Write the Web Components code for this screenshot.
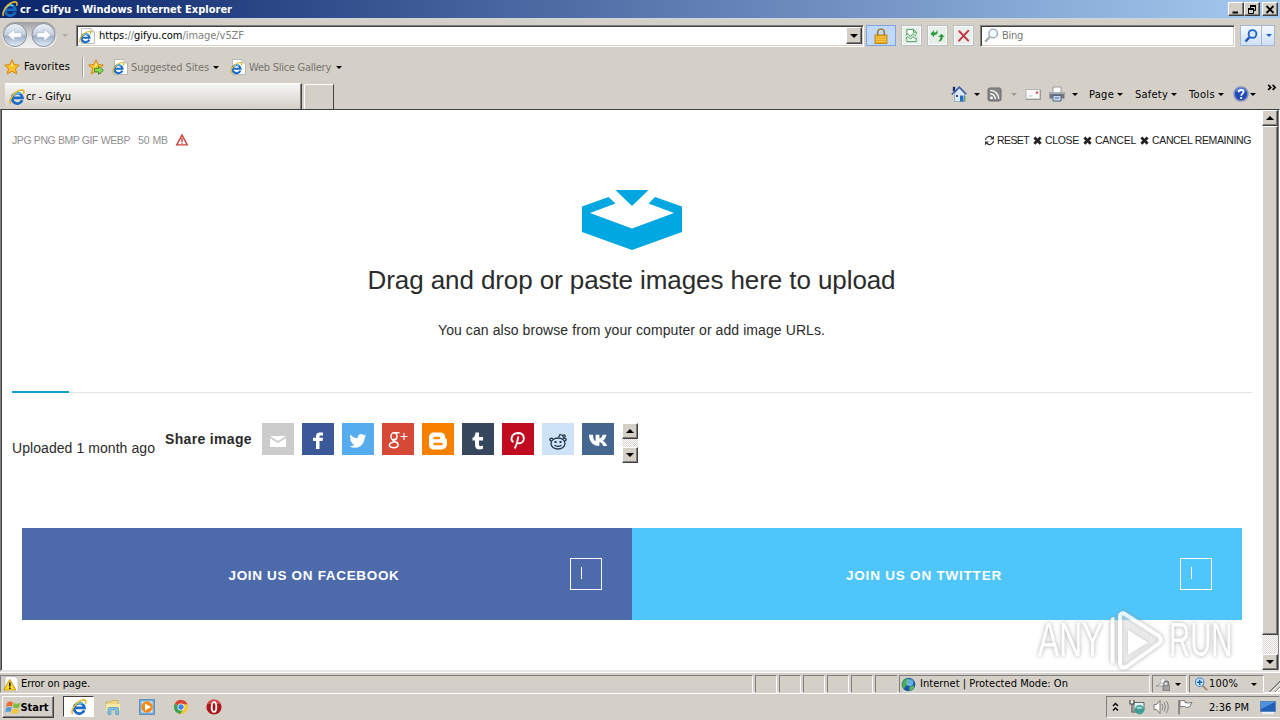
<!DOCTYPE html>
<html lang="en">
<head>
<meta charset="utf-8">
<title>cr - Gifyu</title>
<style>
    body {
        margin: 0;
        width: 1280px;
        height: 720px;
        overflow: hidden;
        background: #d4d0c8;
    }
</style>
</head>
<body>
<desktop-screen></desktop-screen>

<script>
// shared drawings, 16x16 unless a viewBox is given
const IE = `<path d="M13.200 11.200A5.200 5.200 0 1 1 13.500 8.900H4.500" fill="none" stroke="#1b6ac4" stroke-width="2.700"/>
    <path d="M4.300 6.300Q7.500 2.500 11.300 4.900" stroke="#56c5f5" stroke-width="1.500" fill="none"/>
    <path d="M1.600 15C-.8 11.500 5.500 1.700 12.600.9c2.600-.2 2.800 1.800 1.900 4" fill="none" stroke="#e2b82e" stroke-width="1.600"/>`;
const CROSS = '<path d="M2.600.6 5 3 7.400.6l2.200 2.200L7.200 5l2.400 2.400-2.200 2.200L5 7.200 2.600 9.600.4 7.400 2.800 5 .4 2.800z" fill="#222"/>';
const STAR = '<path d="M8 .8 10.200 5.600l5.200.5-3.900 3.600 1.200 5.200L8 12.300l-4.700 2.600 1.200-5.200L.6 6.100l5.200-.5z" fill="#fbc02a" stroke="#cf7e12" stroke-width=".9"/><path d="M8 3 9.300 6.600 6.500 8z" fill="#fff19a"/>';
const ICONS = {
    ie: IE,
    iepage: `<path d="M2.500.5H12L15.500 4v11.500h-13z" fill="#fff" stroke="#aaa" stroke-width=".8"/><path d="M12 .5V4h3.500" fill="#ddd" stroke="#aaa" stroke-width=".6"/><g transform="translate(0 2.800) scale(.78)">${IE}</g>`,
    star: STAR,
    staradd: `${STAR}<path d="M6.500 9.500h4V7.300l5 4-5 4v-2.500h-4z" fill="#8fdc5b" stroke="#288522" stroke-width=".8"/>`,
    lock: '<path d="M4.700 8V4.300a3.300 3.300 0 0 1 6.600 0V8" fill="none" stroke="#a28035" stroke-width="1.700"/><rect x="2" y="7" width="12" height="8.500" fill="#e8a818" stroke="#b57b0b" stroke-width=".8"/><path d="M2.500 9h11M2.500 11.200h11M2.500 13.400h11" stroke="#f7d05c" stroke-width=".9"/>',
    compat: '<path d="M3 7V1.500h7L13 4.500V7M3 10.500v4h10v-4" fill="#fff" stroke="#3d9c4f"/><path d="M10 1.500v3h3M2 8l2-2 3 3 2.500-3 3.500 3M2 11l2-2 3 3 2.500-3 3.500 3" fill="none" stroke="#3d9c4f"/>',
    refresh: '<path d="M.5 6 4.300 2.300v2.500C6.500 4.800 7.300 4 7.600 1.500 9 5.500 7.500 7.300 4.300 7.400v2.500z" fill="#2c9c3c"/><path d="M15.700 9.700 12.300 6.200 8.700 9.700h2.300c0 2.200-.5 3.500-2.500 4.800 3.500 0 5-1.500 5-4.800z" fill="#2c9c3c"/>',
    stop: '<path d="M3.500 3.500 13 13.500M13 3 3.300 13.500" stroke="#c93547" stroke-width="2.100" stroke-linecap="round"/>',
    lens: '<circle cx="9.800" cy="5.800" r="4.600" fill="#f4faff" stroke="#9ea9b6" stroke-width="1.500"/><path d="M6.200 9.400 1.300 14.600" stroke="#a5a5a5" stroke-width="2.200"/>',
    lensblue: '<circle cx="9.500" cy="6" r="3.900" fill="#d5ecff" stroke="#1d62cb" stroke-width="1.800"/><path d="M6.300 9.400 2.500 13.500" stroke="#1d55b8" stroke-width="2.400"/>',
    home: '<path d="M3.500 8v7.500h10V7.500L8.500 2z" fill="#dcebfb" stroke="#8299bd" stroke-width=".7"/><path d="M.8 8.500 8.300 1.200l7 7" fill="none" stroke="#3e5fa8" stroke-width="1.600"/><path d="M3 .8v4.500" stroke="#203077" stroke-width="2.400"/><path d="M9 9.500h3.500v6H9z" fill="#286cc2"/><path d="M5 9h2v2H5z" fill="#3b4c70"/><path d="M13.800 10v5.500" stroke="#62a957" stroke-width="1.400"/>',
    rss: '<rect x="1" y="1" width="14" height="14" rx="2" fill="#858585" stroke="#6f6f6f"/><circle cx="4.800" cy="11.500" r="1.500" fill="#fff"/><path d="M3.500 7.200a5.500 5.500 0 0 1 5.400 5.500M3.500 3.600a9 9 0 0 1 9 9" fill="none" stroke="#fff" stroke-width="1.500"/>',
    mail: '<rect x="1" y="3.500" width="14" height="9.500" fill="#fafafa" stroke="#b6b3b1"/><path d="M1 13.500h14.500V4" fill="none" stroke="#989594"/><path d="M10.800 5.500h2.400v2.200h-2.400z" fill="#d4555c"/><path d="M3.500 10h4" stroke="#bbb"/>',
    printer: '<path d="M4 1h8v6H4z" fill="#fff" stroke="#9a9a9a"/><path d="M.5 6h15v6.500H.5z" fill="#6d7682"/><path d="M.5 6h15v2H.5z" fill="#a5adb7"/><path d="M4 9.500h8v5.500H4z" fill="#c8dbf2" stroke="#536782"/><path d="M6 12h4" stroke="#3f62a0"/>',
    help: '<circle cx="8" cy="8" r="7" fill="#234bb7" stroke="#8292ba" stroke-width="1.500"/><path d="M3 5.500a5.500 5.500 0 0 1 10 0" fill="#6797ed"/><path d="M5.700 6.300C5.700 3 10.600 3.200 10.500 6 10.500 7.500 8.200 7.700 8.200 9.800" stroke="#fff" stroke-width="1.700" fill="none"/><path d="M8.200 11v2" stroke="#fff" stroke-width="1.800"/>',
    warn: '<path d="M2 .5h10l3 3v12H2z" fill="#fff" stroke="#aaa" stroke-width=".6"/><path d="M6.800 3.500.8 14h12z" fill="#ffdf22" stroke="#c89208" stroke-linejoin="round"/><path d="M6.800 6.500v4M6.800 11.600v1.400" stroke="#111" stroke-width="1.600"/>',
    globe: '<circle cx="8" cy="8" r="7.300" fill="#1c57a7"/><path d="M2 4.500C4 1.500 8 1 9 2.500L7 5 8.500 8 5 9.500 3 13C1 11 .5 7 2 4.500z" fill="#48ad55"/><path d="M9 10.500l5-1.500c.5 3-2.500 5.500-5 6z" fill="#57b75a"/><circle cx="9.500" cy="6" r="3.700" fill="#7ccbf4" opacity=".75"/>',
    filter: '<path d="M1 10c2 0 4-2 6-5 3-2 6 1 5 5z" fill="#eee" stroke="#999"/><circle cx="8" cy="5" r="2.500" fill="#fff" stroke="#bbb"/><path d="M9 9V7.500a2.300 2.300 0 0 1 4.600 0V9" fill="none" stroke="#777" stroke-width="1.200"/><path d="M7.500 9h7.500v6H7.500z" fill="#888"/><path d="M9 11h5M9 13h5" stroke="#bbb"/>',
    zoom: '<circle cx="6.500" cy="6" r="4.800" fill="#d6edff" stroke="#3f83d0" stroke-width="1.300"/><path d="M6.500 3v6M3.500 6h6" stroke="#175eb4" stroke-width="1.800"/><path d="m10 10 5 5" stroke="#a78a6c" stroke-width="2.400"/>',
    flag: '<path d="M1 3.200Q4 .5 7.500 2.500L6.300 7.200Q3.500 5.500 0 7.800z" fill="#ec6a2c"/><path d="M8.500 3q3.200 1.800 7 0l-1.300 4.800q-3.500 1.800-7 0z" fill="#7cbc45"/><path d="M0 8.900Q3.300 6.500 6.100 8.300L4.900 13Q2 11.300-1 13.500z" fill="#579bd9"/><path d="M7 9q3.500 1.800 7 0l-1.300 4.700q-3.400 1.800-6.900 0z" fill="#f8c437"/>',
    folder: '<path d="M1 3h5l1-1.500h6V9H1z" fill="#f0d982" stroke="#c2a74f" stroke-width=".7"/><path d="M1 5h14v7H1z" fill="#f7e8a5"/><path d="M3 15.500V9.800Q3 8.500 4.500 8.500h7.500q1.500 0 1.500 1.300v5.700h-2.700V11H5.800v4.500z" fill="#7fc1e6" stroke="#5299c5" stroke-width=".7"/>',
    media: '<rect x=".7" y=".7" width="14.600" height="14.600" fill="#80b7e8" stroke="#4e81b7"/><path d="M2.500 2.500h11v11h-11z" fill="#cfe6fb"/><circle cx="8" cy="8" r="5.800" fill="#f28a19"/><path d="M6 4.500 12 8l-6 3.500z" fill="#fff"/>',
    chrome: '<circle cx="8" cy="8" r="7" fill="#f7c72d"/><path d="M8 8 1.900 4.500A7 7 0 0 1 14.500 5.200H8z" fill="#dc4334"/><path d="M8 8 1.900 4.500A7 7 0 0 0 7.400 15L10.500 9.500z" fill="#3ba05a"/><circle cx="8" cy="8" r="3.500" fill="#fff"/><circle cx="8" cy="8" r="2.700" fill="#4083e0"/>',
    opera: '<circle cx="8" cy="8" r="7.600" fill="#ad171a"/><path d="M1.500 5a7 7 0 0 1 13 0z" fill="#df6260" opacity=".7"/><ellipse cx="8" cy="8" rx="2.300" ry="4.900" fill="#a01518" stroke="#fff" stroke-width="1.800"/>',
    net: '<path d="M5 3.500h10v8H5z" fill="#dff5f7" stroke="#626b6b"/><path d="M1 1v4h4V1M3 5v8h4" fill="none" stroke="#555" stroke-width="1.200"/><path d="M2.200 2h1.600v2H2.200z" fill="#fff"/><circle cx="10.500" cy="10.800" r="4.700" fill="#3f9e95"/><path d="M7 9q3-3 7 0-3 2-7 0" fill="#a0ded0"/>',
    sound: '<path d="M1 5.500h2.500L7 1.500v13l-3.500-4H1z" fill="#fff" stroke="#777"/><path d="M9 5q2 3 0 6M11 3.500q3 4.500 0 9M13.500 2q3.500 6 0 12" fill="none" stroke="#888"/>',
    action: '<path d="M2 1v14.500" stroke="#777" stroke-width="1.500"/><path d="M3 2q3-1 5 0v1.500q3 1 7 0L12.500 8q-3 1-5-.5Q5 7 3 8z" fill="#fff" stroke="#777"/>',
    desk: '<path d="M.5 2.500h15v10H.5z" fill="#2360ba" stroke="#5684b7"/><path d="M1 3h14L1 10z" fill="#4f91df"/><path d="M2 14h12" stroke="#eef" stroke-width="2"/>',
    danger: '<path d="M8 1.500 1 14.500h14z" fill="none" stroke="#cc433c" stroke-width="1.900"/><path d="M8 5.500v5M8 11.500v1.500" stroke="#cc433c" stroke-width="2"/>',
    reload: '<path d="M2 7.500A5.800 5.800 0 0 1 12 4M14 8.500A5.800 5.800 0 0 1 4 12" fill="none" stroke="#333" stroke-width="1.700"/><path d="M14.500 1v5.500H9zM1.500 15V9.500H7z" fill="#333"/>',
    cross: ['0 0 10 10', CROSS],
    chevrons: ['0 0 8 8', '<path d="M1 1.500 3 3.500 1 5.500M4.500 1.500l2 2-2 2" fill="none" stroke="#000" stroke-width="1.300"/>'],
    upchev: ['0 0 7 10', '<path d="M1 4 3.500 1.500 6 4M1 8.500 3.500 6 6 8.500" fill="none" stroke="#000" stroke-width="1.400"/>'],
    min: ['0 0 10 9', '<path d="M1.500 7.500h5.500" stroke="#000" stroke-width="2"/>'],
    restore: ['0 0 10 9', '<path d="M3.500 3V.5h5v5H7" fill="none" stroke="#000"/><path d="M3 1h6M1 4h6" stroke="#000" stroke-width="2"/><path d="M1.500 4v4.500h5V4" fill="none" stroke="#000"/>'],
    close: ['0 0 10 9', '<path d="m1.500 1 7 7M8.500 1l-7 7" stroke="#000" stroke-width="1.800"/>'],
    upload: ['0 0 100 60', '<path d="M33.500 0h33L50 16zM0 16.500 26.500 7 33.500 13.500 8 23 50 38.500 92 23 66.500 13.500 73 7 100 16.500V42L50 60 0 42z" fill="#00a7e1"/>'],
    watermark: ['0 0 56 60', '<path d="M2.500 9q0-3 4-3V52q-4 2-4-2z" fill="#fff"/><path d="M12 48V4.500q1-3 4-2L51 25q4 4 0 7.500L19 55.500q-6 3-7-3z" fill="#fff" fill-opacity=".35" stroke="#fff" stroke-width="4" stroke-linejoin="round"/><path d="M20 19v25l20-12.500z" fill="#fff"/>'],
    // share buttons, 32x32
    email: ['0 0 32 32', '<path d="M8 13h16l-8 5z" fill="#fff"/><path d="M8 15.200 16 20l8-4.800V24H8z" fill="#fff"/>'],
    facebook: ['0 0 32 32', '<path d="M14 26v-8h-3v-3.300h3v-1.500c0-2.700 1.700-3.700 4-3.700h3v3h-2c-1.300 0-1.500.5-1.500 1.400v.8H21l-.5 3.300h-3v8z" fill="#fff"/>'],
    twitter: ['0 0 32 32', '<path transform="translate(7.500 9.500) scale(.7)" d="M23.950 4.570a10 10 0 0 1-2.820.770 4.960 4.960 0 0 0 2.160-2.720 9.900 9.900 0 0 1-3.120 1.190 4.920 4.920 0 0 0-8.380 4.480C7.690 8.090 4.070 6.130 1.640 3.160a4.920 4.920 0 0 0 1.520 6.570 4.900 4.900 0 0 1-2.230-.61v.060a4.920 4.920 0 0 0 3.950 4.830 5 5 0 0 1-2.210.080 4.940 4.940 0 0 0 4.600 3.420A9.870 9.870 0 0 1 0 19.540a14 14 0 0 0 7.550 2.210c9.050 0 14-7.500 14-13.980v-.64a9.900 9.900 0 0 0 2.400-2.560z" fill="#fff"/>'],
    google: ['0 0 32 32', '<g fill="none" stroke="#fff" stroke-width="1.500"><ellipse cx="12" cy="13.500" rx="3" ry="3.700"/><path d="M12 9.700h5.500M14.500 16c-5 0-4 2.300-1.500 2.800 4 .8 4.500 5.900-1 6-6.500 0-6-5.200.5-5.800"/><path d="M18.500 13.500h7M22 10v7" stroke-width="1.200"/></g>'],
    blogger: ['0 0 32 32', '<path d="M12 9.500h6c4 0 5.300 2.500 5.300 5.400 0 1.100 1.700.6 1.700 2v3.600c0 3.800-2.200 6-6 6h-7c-3.500 0-5-2.200-5-5.500v-6c0-3.500 2-5.500 5-5.500z" fill="#fff"/><path d="M12.500 14.900H17M12.500 21h7" stroke="#f80" stroke-width="2.500" stroke-linecap="round"/>'],
    tumblr: ['0 0 32 32', '<path d="M13.500 9.500H17V14h4v3.500h-4v4c0 2 1.500 2 4 1v3.200c-4 1.700-8 .8-8-3.700v-4.500h-2.500v-2.700c2-.6 2.700-2.300 3-5.300z" fill="#fff"/>'],
    pinterest: ['0 0 32 32', '<path d="M11.500 19C8.500 17.800 8.300 10.500 16 10c7.500 0 7.500 9.500 1.500 10.300-1.500.2-2.700-.8-3-1.600M16.300 13.500c-.5 4-1.700 8.500-3.500 12" fill="none" stroke="#fff" stroke-width="1.900"/>'],
    reddit: ['0 0 32 32', '<g fill="none" stroke="#26384c" stroke-width="1.300"><ellipse cx="16" cy="20.500" rx="7" ry="5.500"/><path d="M9.500 18c-3-.5-2-4 1.500-2.300M22.500 18c3-.5 2-4-1.500-2.300M16.500 14.500l1.500-3 3 1M12.500 22.300q3.500 2.200 7 0"/><circle cx="22" cy="13" r="1.200"/></g><path d="M12.500 18h2v2h-2zM17.500 18h2v2h-2z" fill="#26384c"/>'],
    vk: ['0 0 32 32', '<path transform="translate(7.500 8.700) scale(.72)" d="M13.200 19C5 19 .3 13.400.1 5h4.100c.1 6.200 2.800 8.800 5 9.300V5h3.900v5.300c2.300-.2 4.800-2.600 5.700-5.300h3.900a11.500 11.500 0 0 1-5.300 7.500A12 12 0 0 1 23.600 19h-4.200c-.9-2.900-3.200-5.100-6.300-5.400V19z" stroke="#fff" stroke-width="1.400" fill="#fff"/>']
};

// <ui-icon name size [height]>
class UiIcon extends HTMLElement {
    constructor() {
        super();
        this.attachShadow({ mode: 'open' });
    }

    connectedCallback() {
        const icon = ICONS[this.getAttribute('name')];
        const [box, body] = Array.isArray(icon) ? icon : ['0 0 16 16', icon];
        const w = this.getAttribute('size') || 16;
        const h = this.getAttribute('height') || w;
        this.shadowRoot.innerHTML = `
        <style>
            :host { display: block; flex: none; width: ${w}px; height: ${h}px; }
            svg { display: block; overflow: visible; }
        </style>
        <svg width="${w}" height="${h}" viewBox="${box}">${body}</svg>`;
    }
}
customElements.define('ui-icon', UiIcon);

// one line of text, letter-spaced to fill the given width
class FitText extends HTMLElement {
    constructor() {
        super();
        this.attachShadow({ mode: 'open' });
        this.shadowRoot.innerHTML = `
        <style>
            :host { display: block; flex: none; white-space: nowrap; }
            span { display: inline-block; }
        </style>
        <span><slot></slot></span>`;
    }

    connectedCallback() {
        const width = Number(this.getAttribute('width'));
        const span = this.shadowRoot.querySelector('span');
        const natural = span.getBoundingClientRect().width;
        span.style.letterSpacing = (width - natural) / this.textContent.length + 'px';
        this.style.width = width + 'px';
    }
}
customElements.define('fit-text', FitText);

// registers an element that only has static markup
function define(name, css, html) {
    const template = document.createElement('template');
    template.innerHTML = `<style>${css}</style>${html}`;
    customElements.define(name, class extends HTMLElement {
        constructor() {
            super();
            this.attachShadow({ mode: 'open' });
            this.shadowRoot.appendChild(template.content.cloneNode(true));
        }
    });
}

// small black dropdown triangle
define('drop-arrow', `
    :host { display: block; flex: none; width: 0; height: 0; border: 3px solid transparent; border-top-color: var(--arrow, #000); border-bottom: 0; }
    :host([up]) { border: 3px solid transparent; border-bottom-color: #000; border-top: 0; }
    :host([big]) { border-left-width: 4px; border-right-width: 4px; border-top-width: 4px; }
    :host([big][up]) { border-top-width: 0; border-bottom-width: 4px; }
`, '');

// raised classic button
define('raised-button', `
    :host {
        display: flex; flex: none; box-sizing: border-box; align-items: center; justify-content: center;
        width: 16px; height: 16px; background: #d4d0c8;
        border: 1px solid; border-color: #fff #404040 #404040 #fff;
        box-shadow: inset -1px -1px #808080;
    }
`, '<slot></slot>');

define('title-bar', `
    :host { display: flex; flex: none; height: 18px; align-items: center; background: linear-gradient(90deg, #0a246a, #a6caf0); color: #fff; font-weight: bold; }
    fit-text { margin: 2px 0 0 2px; }
    .buttons { display: flex; margin-left: auto; padding-right: 2px; }
    raised-button { width: 16px; height: 14px; }
    .buttons raised-button:last-child { margin-left: 2px; }
`, `
    <ui-icon name="ie" size="16" style="margin-left:2px"></ui-icon>
    <fit-text width="212">cr - Gifyu - Windows Internet Explorer</fit-text>
    <div class="buttons">
        <raised-button><ui-icon name="min" size="10" height="9"></ui-icon></raised-button>
        <raised-button><ui-icon name="restore" size="10" height="9"></ui-icon></raised-button>
        <raised-button><ui-icon name="close" size="10" height="9"></ui-icon></raised-button>
    </div>
`);

define('nav-bar', `
    :host { display: flex; flex: none; height: 36px; align-items: center; box-sizing: border-box; padding-bottom: 2px; border-top: 1px solid #cdd4e2; }
    .travel { width: 61px; margin: -1px 0 0 2px; }
    .field { display: flex; box-sizing: border-box; height: 22px; align-items: center; background: #fff; border: 1px solid; border-color: #808080 #fff #fff #808080; box-shadow: inset 1px 1px #404040, inset -1px -1px #d4d0c8; }
    .address { width: 788px; margin-left: 8px; padding: 0 1px 0 2px; }
    .address fit-text { margin: 1px 0 0 4px; }
    .address raised-button { margin-left: auto; width: 16px; height: 17px; }
    .grey { color: #808080; }
    .tool { display: flex; box-sizing: border-box; width: 21px; height: 21px; margin-left: 5px; align-items: center; justify-content: center; background: #e8eeea; border: 1px solid #b9c1c7; box-shadow: inset 0 0 0 1px #f7faf8; }
    .lock { width: 30px; margin-left: 2px; background: #bfdafd; border-color: #7ca4e4; box-shadow: none; }
    .search { width: 255px; margin-left: 6px; color: #777; padding-left: 3px; }
    .go { display: flex; box-sizing: border-box; height: 21px; width: 35px; margin-left: 5px; border: 1px solid #a5b7d4; background: linear-gradient(#f3f8ff, #cfe0f5); align-items: center; }
    .go ui-icon { margin: 0 2px; }
    .go i { width: 1px; height: 19px; background: #a5b7d4; margin-right: 4px; }
`, `
    <svg class="travel" width="61" height="28" viewBox="0 0 61 28">
        <defs>
            <linearGradient id="g" x2="0" y2="1"><stop stop-color="#edf2f9"/><stop offset=".48" stop-color="#c4d0e0"/><stop offset=".55" stop-color="#9daec6"/><stop offset="1" stop-color="#e4eefb"/></linearGradient>
            <linearGradient id="rim" x2="0" y2="1"><stop stop-color="#9d9da3"/><stop offset=".6" stop-color="#e4e3e3"/><stop offset="1" stop-color="#f3f2f1"/></linearGradient>
        </defs>
        <rect x="0" y="1" width="55" height="26" rx="13" fill="url(#rim)"/>
        <circle cx="13" cy="14" r="11.500" fill="url(#g)" stroke="#8a909a"/><circle cx="41.500" cy="14" r="11.500" fill="url(#g)" stroke="#8a909a"/>
        <path d="M5.500 14l7-6v3.700h7v4.600h-7V20zM49 14l-7-6v3.700h-7v4.600h7V20z" fill="#fff" stroke="#aebbd0" stroke-width=".7"/>
    </svg>
    <drop-arrow style="--arrow:#aaa;margin-left:-1px"></drop-arrow>
    <div class="field address">
        <ui-icon name="iepage"></ui-icon>
        <fit-text width="145">https:<span class="grey">//</span>gifyu.com<span class="grey">/image/v5ZF</span></fit-text>
        <raised-button><drop-arrow big></drop-arrow></raised-button>
    </div>
    <div class="tool lock"><ui-icon name="lock"></ui-icon></div>
    <div class="tool"><ui-icon name="compat" size="15"></ui-icon></div>
    <div class="tool"><ui-icon name="refresh" size="15"></ui-icon></div>
    <div class="tool"><ui-icon name="stop" size="15"></ui-icon></div>
    <div class="field search"><ui-icon name="lens" size="15"></ui-icon><fit-text width="21" style="margin:1px 0 0 3px">Bing</fit-text></div>
    <div class="go"><ui-icon name="lensblue"></ui-icon><i></i><drop-arrow style="--arrow:#1d62cb"></drop-arrow></div>
`);

define('favorites-bar', `
    :host { display: flex; flex: none; height: 26px; align-items: center; padding-left: 4px; }
    .sep { width: 1px; height: 20px; background: #a09c96; box-shadow: 1px 0 #fff; margin: 0 5px 0 12px; }
    .grey { color: #77746f; margin: 1px 0 0 3px; }
`, `
    <ui-icon name="star"></ui-icon>
    <fit-text width="46" style="margin-left:4px">Favorites</fit-text>
    <div class="sep"></div>
    <ui-icon name="staradd"></ui-icon>
    <ui-icon name="iepage" style="margin-left:8px"></ui-icon>
    <fit-text class="grey" width="78">Suggested Sites</fit-text>
    <drop-arrow style="margin-left:4px"></drop-arrow>
    <ui-icon name="iepage" style="margin-left:11px"></ui-icon>
    <fit-text class="grey" width="82">Web Slice Gallery</fit-text>
    <drop-arrow style="margin-left:5px"></drop-arrow>
`);

define('command-bar', `
    :host { display: flex; flex: none; height: 29px; box-sizing: border-box; }
    .tab { display: flex; box-sizing: border-box; width: 297px; height: 26px; margin: 3px 0 0 5px; padding-left: 4px; align-items: center; background: linear-gradient(#f7f6f5, #d4d0c8); border: solid; border-width: 1px 1px 0 0; border-color: #fff #404040; box-shadow: inset -1px 0 #808080; }
    .new { box-sizing: border-box; width: 30px; height: 25px; margin: 4px 0 0 2px; border: solid; border-width: 1px 1px 0 1px; border-color: #fff #404040 #fff #fff; }
    .tools { display: flex; align-items: center; height: 28px; margin-left: auto; padding-right: 3px; }
    .tools > * { margin-left: var(--gap, 0); }
    .tools fit-text { margin-top: 1px; }
`, `
    <div class="tab"><ui-icon name="ie"></ui-icon><fit-text width="45" style="margin-left:1px">cr - Gifyu</fit-text></div>
    <div class="new"></div>
    <div class="tools">
        <ui-icon name="home"></ui-icon>
        <drop-arrow style="--gap:7px"></drop-arrow>
        <ui-icon name="rss" size="15" style="--gap:7px"></ui-icon>
        <drop-arrow style="--gap:9px;--arrow:#999"></drop-arrow>
        <ui-icon name="mail" style="--gap:8px"></ui-icon>
        <ui-icon name="printer" style="--gap:8px"></ui-icon>
        <drop-arrow style="--gap:7px"></drop-arrow>
        <fit-text width="25" style="--gap:11px">Page</fit-text>
        <drop-arrow style="--gap:3px"></drop-arrow>
        <fit-text width="33" style="--gap:12px">Safety</fit-text>
        <drop-arrow style="--gap:3px"></drop-arrow>
        <fit-text width="26" style="--gap:12px">Tools</fit-text>
        <drop-arrow style="--gap:3px"></drop-arrow>
        <ui-icon name="help" style="--gap:9px"></ui-icon>
        <drop-arrow style="--gap:1px"></drop-arrow>
        <ui-icon name="chevrons" size="10" style="--gap:11px;margin-bottom:12px"></ui-icon>
    </div>
`);

define('scroll-bar', `
    :host { display: flex; flex: none; flex-direction: column; width: 16px; background: repeating-conic-gradient(#fff 0 25%, #d9d6d0 0 50%) 0 0 / 2px 2px; justify-content: space-between; }
    ::slotted(raised-button) { flex: 1; height: auto; margin-bottom: 19px; }
`, `
    <raised-button><drop-arrow big up></drop-arrow></raised-button>
    <slot></slot>
    <raised-button><drop-arrow big></drop-arrow></raised-button>
`);

// coloured square, colour comes from --fill
define('share-button', `
    :host { display: block; width: 32px; height: 32px; background: var(--fill); }
`, '<slot></slot>');

define('join-banner', `
    :host { display: flex; box-sizing: border-box; width: 610px; height: 92px; align-items: center; padding: 2px 30px 0 0; background: var(--fill); color: #fff; font: bold 13.5px/16px "Liberation Sans", sans-serif; }
    .label { flex: 1; display: flex; justify-content: center; padding: 1px 0 0 36px; }
    .box { display: flex; box-sizing: border-box; width: 32px; height: 32px; border: 1px solid #fff; margin-bottom: 2px; padding: 8px 0 0 10px; }
    .box i { width: 1px; height: 12px; background: #fff; }
`, `
    <div class="label"><slot></slot></div>
    <div class="box"><i></i></div>
`);

define('water-mark', `
    :host { position: absolute; left: 1038px; top: 610px; display: flex; align-items: center; height: 60px; color: #fff; opacity: .85; font: 48px/60px "Liberation Sans", sans-serif; filter: drop-shadow(0 0 2px #999); }
    .word { flex: none; width: 66px; }
    .word span { display: block; transform: scaleX(var(--squeeze)); transform-origin: 0 50%; }
    ui-icon { margin: 2px 5px 0 4px; }
`, `
    <div class="word"><span style="--squeeze:.66">ANY</span></div>
    <ui-icon name="watermark" size="56" height="60"></ui-icon>
    <div class="word"><span style="--squeeze:.61">RUN</span></div>
`);

define('gifyu-page', `
    :host { display: flex; flex-direction: column; box-sizing: border-box; width: 1260px; padding: 24px 10px 0; background: #fff; color: #2b2b2b; font: 14px/16px "Liberation Sans", sans-serif; }
    .meta { display: flex; height: 13px; align-items: center; padding-right: 1px; font-size: 10.5px; line-height: 13px; color: #8f8f8f; }
    .actions { display: flex; align-items: center; gap: 3px; margin-left: auto; color: #222; }
    .actions ui-icon:not(:first-child) { margin-left: 1px; }
    .actions ui-icon:first-child { margin-right: -1px; }
    .drop { display: flex; flex-direction: column; align-items: center; height: 244px; padding-top: 43px; box-sizing: border-box; }
    .big { font-size: 26px; line-height: 30px; margin: 15px 1px 0 0; }
    .line { height: 2px; background: linear-gradient(#fff 1px, #e2e2e2 1px); }
    .line div { width: 57px; height: 2px; background: #189ec8; }
    .share { display: flex; height: 40px; margin-top: 30px; }
    .buttons { display: flex; gap: 8px; margin: 0 8px 0 11px; }
    .join { display: flex; margin: 65px 10px 0; }
`, `
    <div class="meta">
        <fit-text width="118">JPG PNG BMP GIF WEBP</fit-text>
        <fit-text width="30" style="margin-left:8px">50 MB</fit-text>
        <ui-icon name="danger" size="12" style="margin:-1px 0 0 8px"></ui-icon>
        <div class="actions">
            <ui-icon name="reload" size="11"></ui-icon><fit-text width="32">RESET</fit-text>
            <ui-icon name="cross" size="9"></ui-icon><fit-text width="34">CLOSE</fit-text>
            <ui-icon name="cross" size="9"></ui-icon><fit-text width="41">CANCEL</fit-text>
            <ui-icon name="cross" size="9"></ui-icon><fit-text width="99">CANCEL REMAINING</fit-text>
        </div>
    </div>
    <div class="drop">
        <ui-icon name="upload" size="100" height="60"></ui-icon>
        <fit-text class="big" width="528">Drag and drop or paste images here to upload</fit-text>
        <fit-text width="387" style="margin:27px 1px 0 0">You can also browse from your computer or add image URLs.</fit-text>
    </div>
    <div class="line"><div></div></div>
    <div class="share">
        <fit-text width="143" style="margin-top:17px">Uploaded 1 month ago</fit-text>
        <fit-text width="87" style="margin:8px -1px 0 10px;font-weight:bold">Share image</fit-text>
        <div class="buttons">
            <share-button style="--fill:#ccc"><ui-icon name="email" size="32"></ui-icon></share-button>
            <share-button style="--fill:#3b5998"><ui-icon name="facebook" size="32"></ui-icon></share-button>
            <share-button style="--fill:#55acee"><ui-icon name="twitter" size="32"></ui-icon></share-button>
            <share-button style="--fill:#d64937"><ui-icon name="google" size="32"></ui-icon></share-button>
            <share-button style="--fill:#f88000"><ui-icon name="blogger" size="32"></ui-icon></share-button>
            <share-button style="--fill:#35465d"><ui-icon name="tumblr" size="32"></ui-icon></share-button>
            <share-button style="--fill:#c10b1e"><ui-icon name="pinterest" size="32"></ui-icon></share-button>
            <share-button style="--fill:#cee3f8"><ui-icon name="reddit" size="32"></ui-icon></share-button>
            <share-button style="--fill:#45668e"><ui-icon name="vk" size="32"></ui-icon></share-button>
        </div>
        <scroll-bar></scroll-bar>
    </div>
    <div class="join">
        <join-banner style="--fill:#4d6bab"><fit-text width="171">JOIN US ON FACEBOOK</fit-text></join-banner>
        <join-banner style="--fill:#4ec6fa"><fit-text width="156">JOIN US ON TWITTER</fit-text></join-banner>
    </div>
`);

define('status-bar', `
    :host { display: flex; flex: none; height: 22px; box-sizing: border-box; padding-top: 2px; gap: 2px; border-top: 1px solid #fff; border-bottom: 2px solid #fff; }
    .panel { display: flex; flex: none; box-sizing: border-box; height: 18px; width: 22px; align-items: center; border: 1px solid; border-color: #808080 #fff #d4d0c8 #808080; }
    .grip { flex: 1; background: repeating-linear-gradient(135deg, #d4d0c8 0 2px, #808080 2px 3px, #fff 3px 4px); clip-path: polygon(100% 20%, 100% 100%, 20% 100%); }
`, `
    <div class="panel" style="width:753px"><ui-icon name="warn" style="margin-left:2px"></ui-icon><fit-text width="69" style="margin-left:2px">Error on page.</fit-text></div>
    <div class="panel"></div><div class="panel"></div><div class="panel"></div><div class="panel"></div><div class="panel"></div>
    <div class="panel" style="border-right:0"></div>
    <div class="panel" style="width:251px"><ui-icon name="globe" size="15" style="margin-left:1px"></ui-icon><fit-text width="148" style="margin-left:4px">Internet | Protected Mode: On</fit-text></div>
    <div class="panel" style="width:35px"><ui-icon name="filter" style="margin-left:2px"></ui-icon><drop-arrow style="margin-left:4px"></drop-arrow></div>
    <div class="panel" style="width:75px"><ui-icon name="zoom" size="14" style="margin-left:4px"></ui-icon><fit-text width="29" style="margin-left:1px">100%</fit-text><drop-arrow style="margin-left:13px"></drop-arrow></div>
    <div class="grip"></div>
`);

define('task-bar', `
    :host { display: flex; flex: none; height: 26px; box-sizing: border-box; padding-top: 2px; align-items: flex-start; }
    .start { width: 52px; height: 22px; margin-left: 2px; font-weight: bold; }
    .active { display: flex; width: 31px; height: 21px; margin: 0 11px 0 9px; box-sizing: border-box; align-items: center; justify-content: center; background: #fff; border: 1px solid; border-color: #404040 #fff #fff #404040; }
    .launch { display: flex; gap: 18px; padding-top: 3px; }
    .launch ui-icon:last-child { margin-left: -1px; }
    .tray { display: flex; flex: none; box-sizing: border-box; width: 174px; height: 22px; margin-left: auto; align-items: center; border: 1px solid; border-color: #808080 transparent #fff #808080; padding-left: 5px; }
`, `
    <raised-button class="start"><ui-icon name="flag" size="15"></ui-icon><fit-text width="28" style="margin:1px 2px 0 0">Start</fit-text></raised-button>
    <div class="active"><ui-icon name="ie"></ui-icon></div>
    <div class="launch">
        <ui-icon name="folder"></ui-icon>
        <ui-icon name="media"></ui-icon>
        <ui-icon name="chrome"></ui-icon>
        <ui-icon name="opera"></ui-icon>
    </div>
    <div class="tray">
        <ui-icon name="upchev" size="7" height="10"></ui-icon>
        <ui-icon name="net" style="margin-left:10px"></ui-icon>
        <ui-icon name="sound" style="margin-left:8px"></ui-icon>
        <ui-icon name="action" style="margin-left:8px"></ui-icon>
        <fit-text width="40" style="margin:1px 0 0 16px">2:36 PM</fit-text>
        <ui-icon name="desk" style="margin-left:11px"></ui-icon>
    </div>
`);

define('desktop-screen', `
    :host { display: flex; flex-direction: column; position: relative; width: 1280px; height: 720px; background: #d4d0c8; color: #000; font: 11px/14px "DejaVu Sans Condensed", "DejaVu Sans", sans-serif; }
    .view { display: flex; flex: none; box-sizing: border-box; height: 563px; border: solid; border-width: 1px 1px 2px 1px; border-color: #404040 #fff #e8e6e2 #808080; box-shadow: inset 1px 0 #404040, inset -1px 0 #808080; padding: 0 1px; }
`, `
    <title-bar></title-bar>
    <nav-bar></nav-bar>
    <favorites-bar></favorites-bar>
    <command-bar></command-bar>
    <div class="view">
        <gifyu-page></gifyu-page>
        <scroll-bar><raised-button></raised-button></scroll-bar>
    </div>
    <status-bar></status-bar>
    <task-bar></task-bar>
    <water-mark></water-mark>
`);
</script>
</body>
</html>
